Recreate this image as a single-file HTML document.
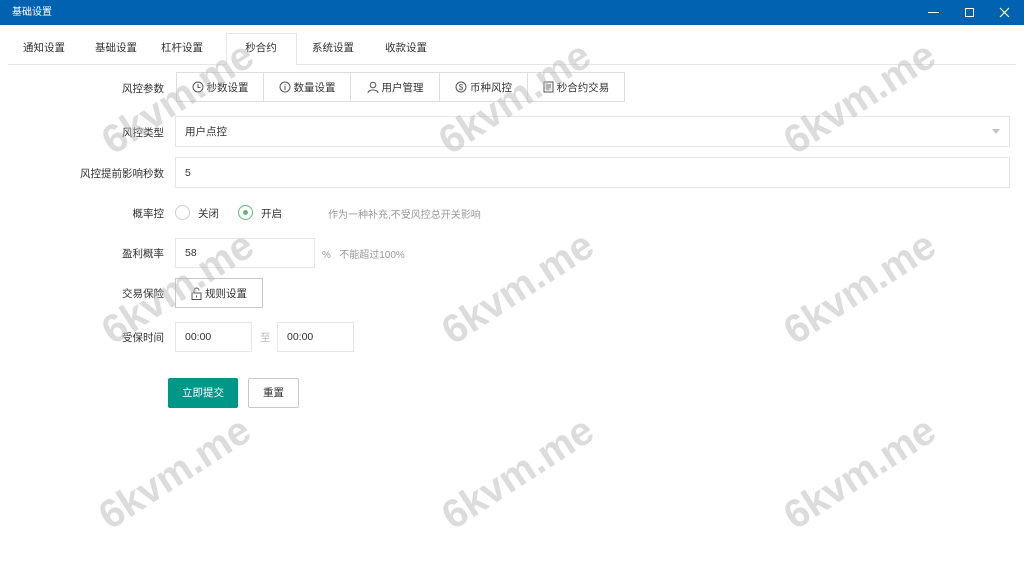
<!DOCTYPE html>
<html><head><meta charset="utf-8"><style>
*{margin:0;padding:0;box-sizing:border-box}
body{width:1024px;height:571px;background:#fff;font-family:"Liberation Sans","Noto Sans CJK SC",sans-serif;font-size:10.5px;color:#333;position:relative;overflow:hidden}
.a{position:absolute}
.title{left:0;top:0;width:1024px;height:25px;background:#0062b0;color:#fff;font-size:10px;line-height:25px;padding-left:12px}
.tab{top:33px;height:31px;line-height:31px;font-size:10.5px;text-align:center}
.lbl{text-align:right;width:160px;left:4px;font-size:10.5px}
.inp{border:1px solid #e6e6e6;background:#fff;padding-left:9px;display:flex;align-items:center;font-size:10.5px}
.wm{font-size:40px;font-weight:bold;color:rgba(185,185,185,.5);transform:rotate(-33deg);white-space:nowrap;width:220px;text-align:center;margin-left:-110px;margin-top:-24px;font-family:"Liberation Sans",sans-serif}
.grp{left:176px;top:72px;height:30px;border:1px solid #ddd;display:flex}
.grp div{border-right:1px solid #ddd;display:flex;align-items:center;justify-content:center;gap:3px;font-size:10.5px}
.grp div:last-child{border-right:none}
</style></head><body>
<div class="a title">基础设置</div>
<div class="a" style="left:928px;top:12px;width:11px;height:1px;background:#fff"></div>
<div class="a" style="left:965px;top:8px;width:9px;height:9px;border:1px solid #fff"></div>
<svg class="a" style="left:999px;top:7px" width="11" height="11"><path d="M1 1L10 10M10 1L1 10" stroke="#fff" stroke-width="1.2"/></svg>

<div class="a" style="left:8px;top:64px;width:1008px;height:1px;background:#e6e6e6"></div>
<div class="a" style="left:226px;top:33px;width:71px;height:32px;border:1px solid #e6e6e6;border-bottom:none;background:#fff"></div>
<div class="a tab" style="left:14px;width:60px">通知设置</div>
<div class="a tab" style="left:86px;width:60px">基础设置</div>
<div class="a tab" style="left:152px;width:60px">杠杆设置</div>
<div class="a tab" style="left:231px;width:60px">秒合约</div>
<div class="a tab" style="left:303px;width:60px">系统设置</div>
<div class="a tab" style="left:376px;width:60px">收款设置</div>

<div class="a lbl" style="top:81px">风控参数</div>
<div class="a grp">
<div style="width:87px"><svg width="12" height="12"><circle cx="6" cy="6" r="5" fill="none" stroke="#555"/><path d="M6 3V6.5H8.5" fill="none" stroke="#555"/></svg>秒数设置</div>
<div style="width:87px"><svg width="12" height="12"><circle cx="6" cy="6" r="5" fill="none" stroke="#555"/><path d="M6 5V9M6 3V3.8" stroke="#555"/></svg>数量设置</div>
<div style="width:89px"><svg width="12" height="12"><circle cx="6" cy="4" r="2.8" fill="none" stroke="#555"/><path d="M1 12C1 8 11 8 11 12" fill="none" stroke="#555"/></svg>用户管理</div>
<div style="width:88px"><svg width="12" height="12"><circle cx="6" cy="6" r="5" fill="none" stroke="#555"/><text x="6" y="9" font-size="8" text-anchor="middle" fill="#555">$</text></svg>币种风控</div>
<div style="width:96px"><svg width="11" height="12"><rect x="1" y="1" width="9" height="10" fill="none" stroke="#555"/><path d="M3 4H8M3 6H8M3 8H6" stroke="#555"/></svg>秒合约交易</div>
</div>

<div class="a lbl" style="top:125px">风控类型</div>
<div class="a inp" style="left:175px;top:116px;width:835px;height:31px">用户点控</div>
<div class="a" style="left:992px;top:129px;border:4px solid transparent;border-top:5px solid #c2c2c2"></div>

<div class="a lbl" style="top:166px">风控提前影响秒数</div>
<div class="a inp" style="left:175px;top:157px;width:835px;height:31px">5</div>

<div class="a lbl" style="top:206px">概率控</div>
<div class="a" style="left:175px;top:205px;width:15px;height:15px;border:1px solid #ccc;border-radius:50%"></div>
<div class="a" style="left:198px;top:206px">关闭</div>
<div class="a" style="left:238px;top:205px;width:15px;height:15px;border:1px solid #5fb878;border-radius:50%"></div>
<div class="a" style="left:243px;top:210px;width:5px;height:5px;background:#5fb878;border-radius:50%"></div>
<div class="a" style="left:261px;top:206px">开启</div>
<div class="a" style="left:328px;top:206px;color:#999;font-size:10px">作为一种补充,不受风控总开关影响</div>

<div class="a lbl" style="top:246px">盈利概率</div>
<div class="a inp" style="left:175px;top:238px;width:140px;height:30px">58</div>
<div class="a" style="left:322px;top:246px;color:#999;font-size:10px">%&nbsp;&nbsp; 不能超过100%</div>

<div class="a lbl" style="top:286px">交易保险</div>
<div class="a inp" style="left:175px;top:278px;width:88px;height:30px;border-color:#c9c9c9;padding-left:15px;gap:3px"><svg width="11" height="13"><path d="M3 6V3.5A2.5 2.5 0 0 1 8 3.5" fill="none" stroke="#555"/><rect x="1" y="6" width="9" height="6.5" fill="none" stroke="#555"/><path d="M5.5 8.5V10.5" stroke="#555"/></svg>规则设置</div>

<div class="a lbl" style="top:330px">受保时间</div>
<div class="a inp" style="left:175px;top:322px;width:77px;height:30px">00:00</div>
<div class="a" style="left:260px;top:330px;color:#bbb">至</div>
<div class="a inp" style="left:277px;top:322px;width:77px;height:30px">00:00</div>

<div class="a" style="left:168px;top:378px;width:70px;height:30px;background:#009688;color:#fff;border-radius:2px;text-align:center;line-height:30px">立即提交</div>
<div class="a" style="left:248px;top:378px;width:51px;height:30px;border:1px solid #c9c9c9;border-radius:2px;text-align:center;line-height:28px">重置</div>

<div class="a wm" style="left:178px;top:100px">6kvm.me</div>
<div class="a wm" style="left:515px;top:100px">6kvm.me</div>
<div class="a wm" style="left:860px;top:100px">6kvm.me</div>
<div class="a wm" style="left:178px;top:290px">6kvm.me</div>
<div class="a wm" style="left:518px;top:290px">6kvm.me</div>
<div class="a wm" style="left:860px;top:290px">6kvm.me</div>
<div class="a wm" style="left:175px;top:475px">6kvm.me</div>
<div class="a wm" style="left:518px;top:475px">6kvm.me</div>
<div class="a wm" style="left:860px;top:475px">6kvm.me</div>
</body></html>
